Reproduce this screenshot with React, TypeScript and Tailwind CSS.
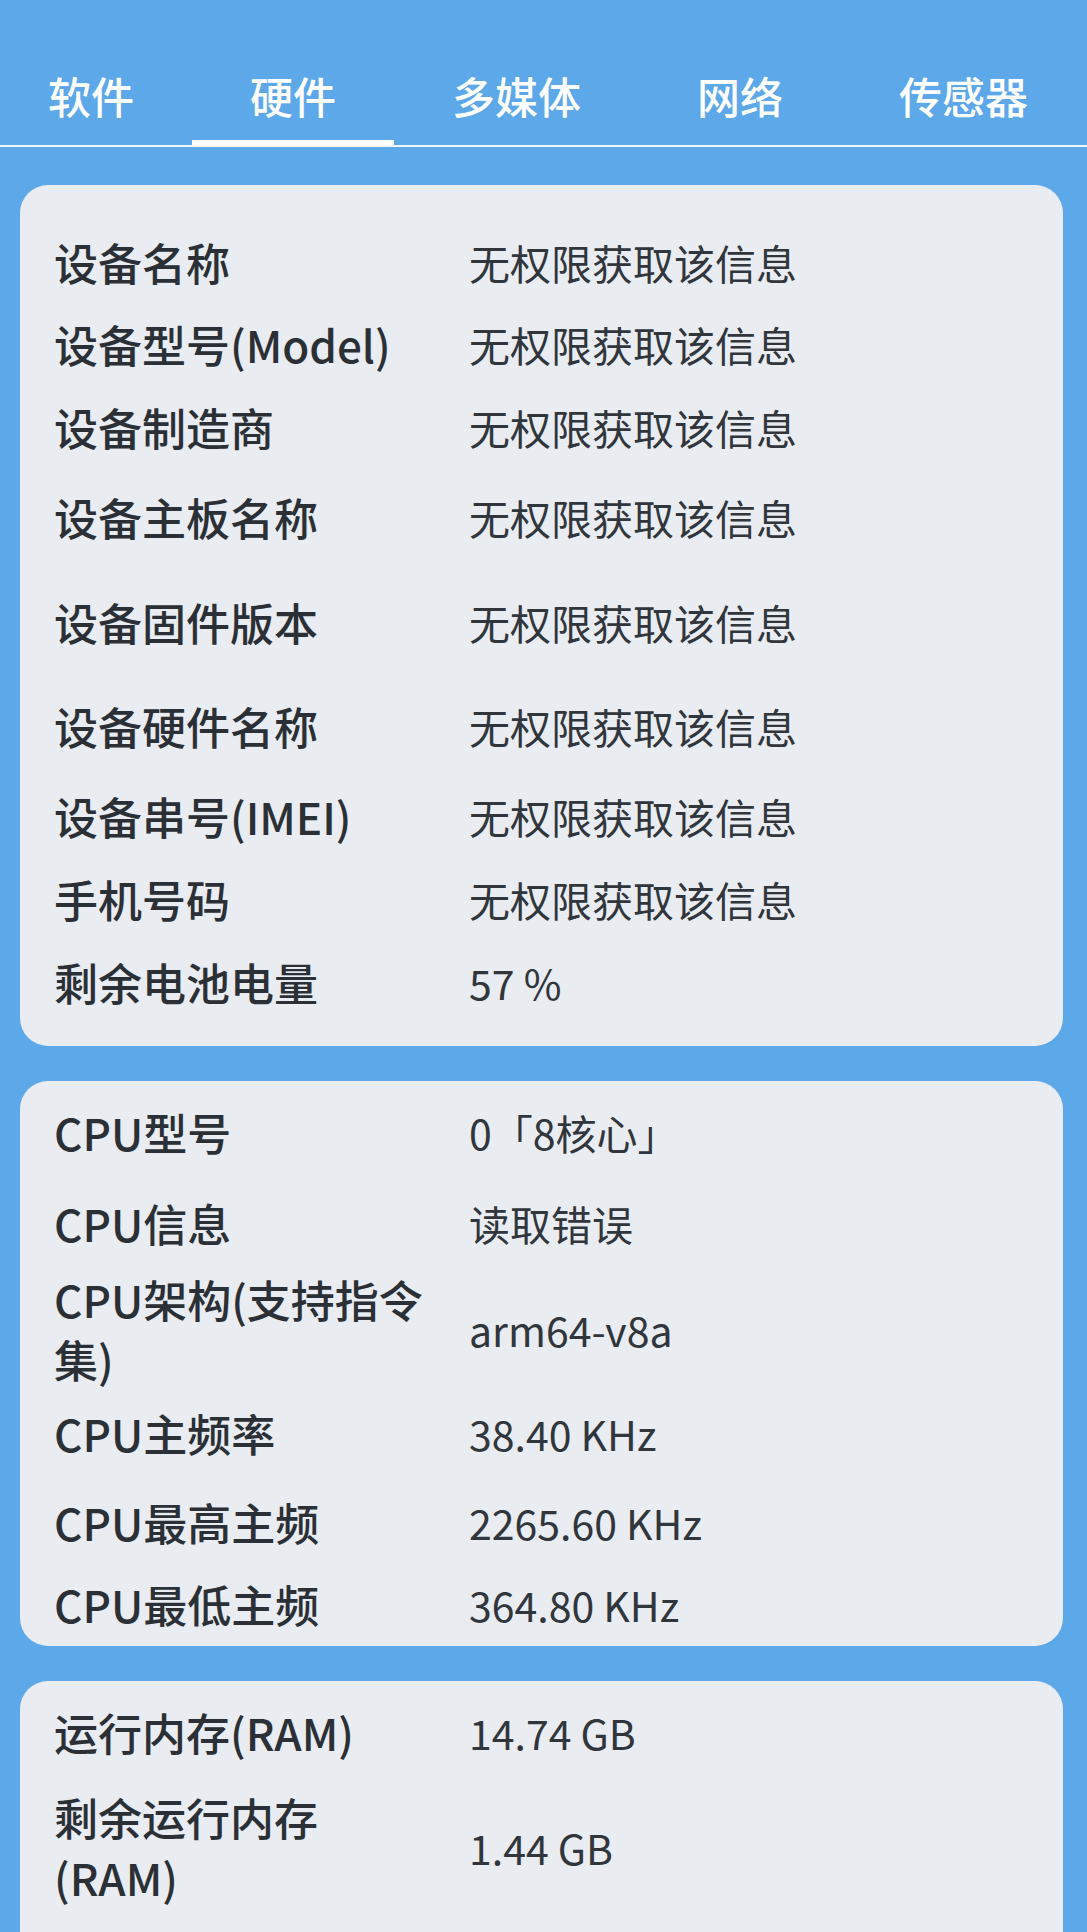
import React from 'react';

type Item = { label: string; value: string; h: string };

const tabs = ['软件', '硬件', '多媒体', '网络', '传感器'];

const deviceInfo: Item[] = [
  { label: '设备名称', value: '无权限获取该信息', h: 'h-[81px]' },
  { label: '设备型号(Model)', value: '无权限获取该信息', h: 'h-[83px]' },
  { label: '设备制造商', value: '无权限获取该信息', h: 'h-[83px]' },
  { label: '设备主板名称', value: '无权限获取该信息', h: 'h-[98px]' },
  { label: '设备固件版本', value: '无权限获取该信息', h: 'h-[112px]' },
  { label: '设备硬件名称', value: '无权限获取该信息', h: 'h-[96px]' },
  { label: '设备串号(IMEI)', value: '无权限获取该信息', h: 'h-[83px]' },
  { label: '手机号码', value: '无权限获取该信息', h: 'h-[84px]' },
  { label: '剩余电池电量', value: '57 %', h: 'h-[82px]' },
];

const cpuInfo: Item[] = [
  { label: 'CPU型号', value: '0「8核心」', h: 'h-[82px]' },
  { label: 'CPU信息', value: '读取错误', h: 'h-[100px]' },
  { label: 'CPU架构(支持指令集)', value: 'arm64-v8a', h: 'h-[112px]' },
  { label: 'CPU主频率', value: '38.40 KHz', h: 'h-[96px]' },
  { label: 'CPU最高主频', value: '2265.60 KHz', h: 'h-[82px]' },
  { label: 'CPU最低主频', value: '364.80 KHz', h: 'h-[82px]' },
];

const memoryInfo: Item[] = [
  { label: '运行内存(RAM)', value: '14.74 GB', h: 'h-[82px]' },
  { label: '剩余运行内存(RAM)', value: '1.44 GB', h: 'h-[148px]' },
];

function InfoRow({ item }: { item: Item }) {
  return (
    <div className={`flex items-center ${item.h}`}>
      <div className="w-[378px] shrink-0 text-[44px] leading-[60px] font-medium text-[#2b3036]">
        {item.label}
      </div>
      <div className="pl-[37px] text-[41px] leading-[56px] text-[#30363c]">{item.value}</div>
    </div>
  );
}

function InfoCard({ items, className }: { items: Item[]; className: string }) {
  return (
    <div className={`ml-[20px] mr-[24px] rounded-[28px] bg-[#e9ecf0] pl-[34px] pr-[20px] ${className}`}>
      {items.map((item) => (
        <InfoRow key={item.label} item={item} />
      ))}
    </div>
  );
}

export default function App() {
  return (
    <div className="h-[1932px] overflow-hidden bg-[#5da8e8] font-['Noto_Sans_CJK_SC','Noto_Sans',sans-serif]">
      {/* Tabs */}
      <div className="pt-[45px]">
        <div className="border-b-2 border-white/90 overflow-hidden">
          <div className="flex -ml-[10px] whitespace-nowrap">
            {tabs.map((tab, i) => (
              <div
                key={tab}
                className="relative flex h-[100px] shrink-0 items-center px-[58px] text-[43px] font-medium text-white"
              >
                {tab}
                {i === 1 && <span className="absolute bottom-0 left-0 right-0 h-[5px] bg-white" />}
              </div>
            ))}
          </div>
        </div>
      </div>

      <div className="mt-[38px] flex flex-col gap-[35px]">
        <InfoCard items={deviceInfo} className="pt-[36px] pb-[23px]" />
        <InfoCard items={cpuInfo} className="pt-[10px] pb-[1px]" />
        <InfoCard items={memoryInfo} className="pt-[10px] pb-[200px]" />
      </div>
    </div>
  );
}
